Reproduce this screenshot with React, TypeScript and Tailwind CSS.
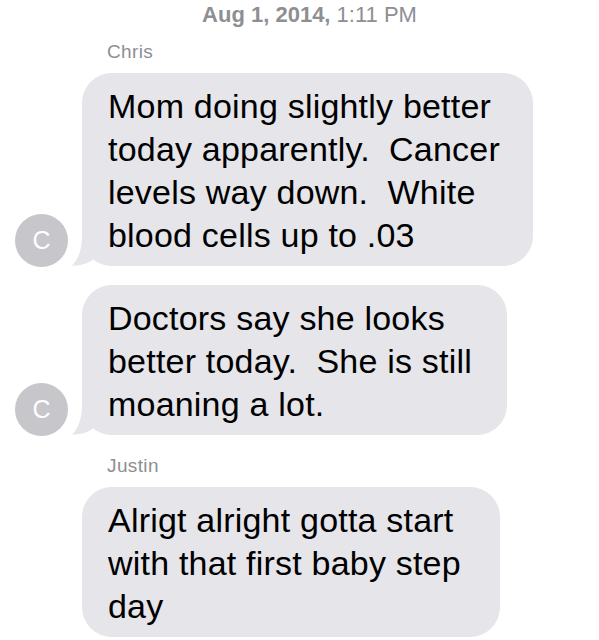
import React from 'react';

const font = { fontFamily: '"Liberation Sans", Arial, sans-serif' };

function Tail() {
  return (
    <svg
      className="absolute left-[-10px] bottom-0"
      width="28"
      height="30"
      viewBox="0 0 28 30"
    >
      <path d="M10 0 C10 14 6 24 0 29.5 C8 30 17 27 22 23 L28 0 Z" fill="#e5e5ea" />
    </svg>
  );
}

function Avatar({ letter }: { letter: string }) {
  return (
    <div className="w-[53px] h-[53px] shrink-0 rounded-full bg-[#c6c6cb] flex items-center justify-center text-white text-[25px] mb-[-1px]">
      {letter}
    </div>
  );
}

function Bubble({ lines, width, tail, avatar }: { lines: string[]; width: string; tail?: boolean; avatar?: boolean }) {
  return (
    <div className="flex items-end pl-[15px] gap-[14px]">
      {avatar ? <Avatar letter="C" /> : <div className="w-[53px] shrink-0" />}
      <div className={`relative bg-[#e5e5ea] rounded-[30px] pl-[26px] pt-[12px] pb-[9px] ${width}`}>
        {tail && <Tail />}
        <div className="relative text-[34px] leading-[43px] tracking-[0.006em] text-black whitespace-pre">
          {lines.map((l, i) => (
            <div key={i}>{l}</div>
          ))}
        </div>
      </div>
    </div>
  );
}

export default function App() {
  return (
    <div className="w-[599px] h-[640px] bg-white overflow-hidden" style={font}>
      {/* Timestamp */}
      <div className="pt-[2px] pl-[20px] text-center text-[22px] leading-[26px] text-[#8e8e93]">
        <span className="font-semibold">Aug 1, 2014,</span> 1:11 PM
      </div>

      <div className="mt-[13px] pl-[107px] text-[19px] leading-[22px] tracking-[0.02em] text-[#8e8e93]">Chris</div>

      <div className="mt-[10px]">
        <Bubble
          avatar
          tail
          width="w-[451px]"
          lines={[
            'Mom doing slightly better',
            'today apparently.  Cancer',
            'levels way down.  White',
            'blood cells up to .03',
          ]}
        />
      </div>

      <div className="mt-[19px]">
        <Bubble
          avatar
          tail
          width="w-[425px]"
          lines={['Doctors say she looks', 'better today.  She is still', 'moaning a lot.']}
        />
      </div>

      <div className="mt-[20px] pl-[107px] text-[19px] leading-[22px] tracking-[0.02em] text-[#8e8e93]">Justin</div>

      <div className="mt-[10px]">
        <Bubble
          width="w-[418px]"
          lines={['Alrigt alright gotta start', 'with that first baby step', 'day']}
        />
      </div>
    </div>
  );
}
